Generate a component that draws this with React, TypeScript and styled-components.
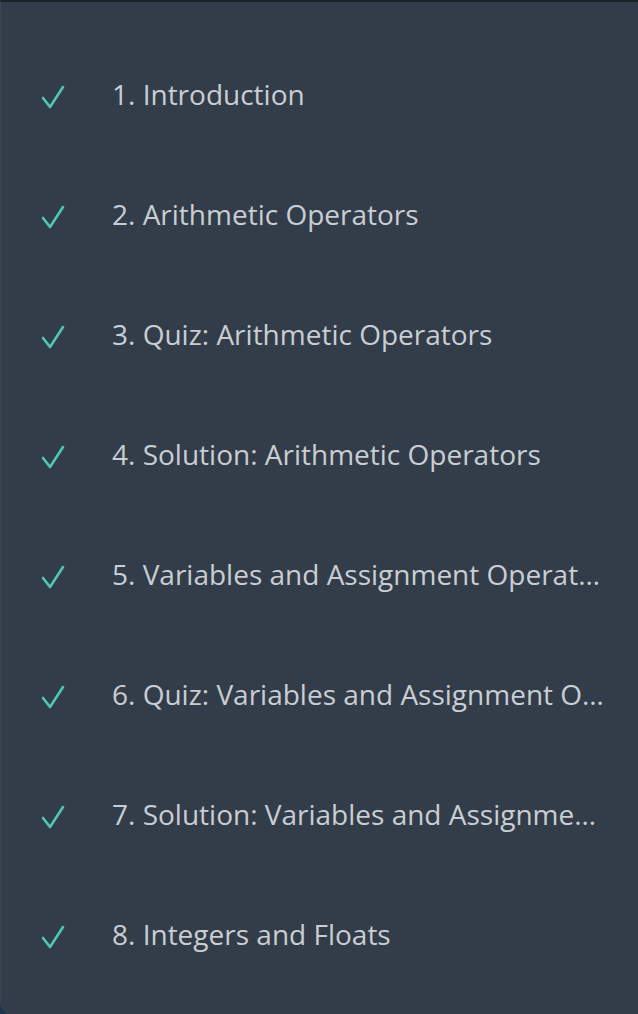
import React from "react";
import styled, { createGlobalStyle } from "styled-components";

const Global = createGlobalStyle`
  html, body { margin: 0; padding: 0; background: #1d3352; }
  body { width: 638px; height: 1014px; overflow: hidden; }
`;

const Panel = styled.div`
  box-sizing: border-box;
  width: 638px;
  height: 1014px;
  background: #323d49;
  border-top: 2px solid #1b2229;
  border-left: 1px solid #3a4552;
  border-bottom-left-radius: 12px;
  padding-top: 34px;
  display: flex;
  flex-direction: column;
  font-family: "Open Sans", sans-serif;
`;

const Row = styled.div`
  height: 120px;
  display: flex;
  align-items: flex-start;
  padding-left: 40px;
  padding-right: 34px;
`;

const Check = styled.svg`
  flex: 0 0 auto;
  width: 26px;
  height: 26px;
  margin-top: 49px;
`;

const Label = styled.div`
  margin-left: 45px;
  font-size: 28px;
  line-height: 40px;
  margin-top: 38px;
  color: #c9ced4;
  white-space: nowrap;
  overflow: hidden;
  text-overflow: ellipsis;
  min-width: 0;
`;

const items = [
  "1. Introduction",
  "2. Arithmetic Operators",
  "3. Quiz: Arithmetic Operators",
  "4. Solution: Arithmetic Operators",
  "5. Variables and Assignment Operators",
  "6. Quiz: Variables and Assignment Operators",
  "7. Solution: Variables and Assignment Operators",
  "8. Integers and Floats",
];

export default function App() {
  return (
    <>
      <Global />
      <Panel>
        {items.map((t) => (
          <Row key={t}>
            <Check viewBox="0 0 26 26">
              <path d="M2 13 L9 22 L22 2" fill="none" stroke="#4fc7b4" strokeWidth="2.6" strokeLinecap="round" strokeLinejoin="round" />
            </Check>
            <Label title={t}>{t}</Label>
          </Row>
        ))}
      </Panel>
    </>
  );
}
